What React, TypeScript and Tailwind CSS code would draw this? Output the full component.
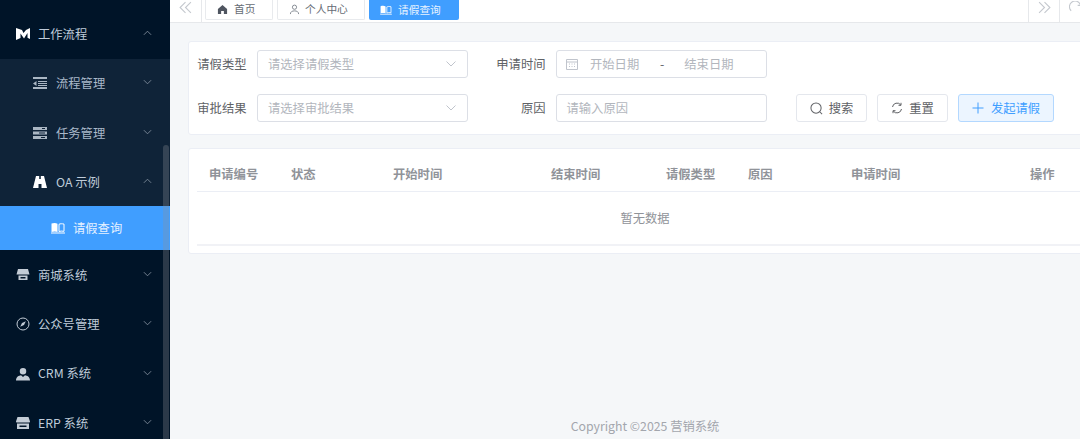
const font = { fontFamily: '"Noto Sans CJK SC", "Noto Sans", sans-serif' };

function Chevron({ up }: { up?: boolean }) {
  return (
    <svg viewBox="0 0 10 6" className="absolute left-[143px] top-1/2 -translate-y-[calc(50%+1px)] w-[9px] h-[6px] text-[#7f8c9b]" fill="none" stroke="currentColor" strokeWidth="1">
      <path d={up ? "M1 5l4-4 4 4" : "M1 1l4 4 4-4"} />
    </svg>
  );
}

const icons: Record<string, React.ReactNode> = {
  workflow: <path d="M0 1l6 2 1.500 3L10 3l4-2v11l-2.500-1.300V6L8 11.500 4.500 6.500V11L0 13z" />,
  flow: <path d="M0 1h14v2H0zM5 5h9v1H5zM5 7h9v1H5zM5 9h9v1H5zM0 11h14v2H0zM3.500 5v5L0 7.500z" />,
  task: (
    <path fillRule="evenodd" d="M0 1h14v3H0zM9 2v1h3V2zM0 5.500h14v3H0zM6 6.500v1h6v-1zM0 10h14v3H0zM8 11v1h4v-1z" />
  ),
  oa: <path d="M3 1h3.200v3h1.600V1H11l3 12H8.500V9h-3v4H0z" />,
  shop: <path d="M2 1h10l1.500 5.500H.5zM2.500 7.500h9V12h-9zM4.500 9v1.500h5V9z" fillRule="evenodd" />,
  user: <path d="M7 1a3 3 0 110 6.500A3 3 0 017 1zM0 13.500C0 10 3 8.500 5 8.300L7 10l2-1.700c2 .2 5 1.700 5 5.200z" />,
  store: (
    <path fillRule="evenodd" d="M1.500 1h11L14 5.500c0 .6-.4 1-1 1H1c-.6 0-1-.4-1-1zM1 7.500h12V13H1zM3.500 9.500v1.500h7V9.500z" />
  ),
};

function BookIcon({ className }: { className: string }) {
  return (
    <svg viewBox="0 0 14 12" className={className} fill="currentColor">
      <path d="M.5 1.500c2-.8 4.500-.8 6 .2v8.300C5 9.300 2.500 9.300.5 10z" />
      <path d="M8 2.300c1.300-.7 3-.7 5-.2V9.300c-2-.4-3.700-.3-5 .2z" fill="none" stroke="currentColor" />
      <path d="M0 10.500h14v1H0z" />
    </svg>
  );
}

function NavRow({ label, icon, up, sub }: { label: string; icon: React.ReactNode; up?: boolean; sub?: boolean }) {
  return (
    <div className={`relative flex items-center h-[49.300px] text-[12.300px] ${sub ? "pl-[33px] text-[#a9b8c9]" : "pl-4 text-[#bfcbd9]"}`}>
      <span className={`${sub ? "w-[23px]" : "w-[22px]"} shrink-0`}>{icon}</span>
      <span>{label}</span>
      <Chevron up={up} />
    </div>
  );
}

function Glyph({ name, white, dim }: { name: string; white?: boolean; dim?: boolean }) {
  return (
    <svg
      viewBox="0 0 14 14"
      className={`w-[14px] h-[14px] ${white ? "text-white" : dim ? "text-[#aab6c3]" : "text-[#c3ccd6]"}`}
      fill="currentColor"
    >
      {icons[name]}
    </svg>
  );
}

function Sidebar() {
  return (
    <aside className="relative w-[170px] shrink-0 h-full overflow-hidden bg-[#001428] pt-[9.500px]">
      <NavRow label="工作流程" up icon={<Glyph name="workflow" white />} />
      <div className="bg-[#0f2338]">
        <NavRow sub label="流程管理" icon={<Glyph name="flow" dim />} />
        <NavRow sub label="任务管理" icon={<Glyph name="task" dim />} />
        <div className="relative flex items-center h-[49px] pl-[33px] text-[12.300px] text-[#bfcbd9]">
          <span className="w-[23px] shrink-0"><Glyph name="oa" white /></span>
          <span>OA 示例</span>
          <Chevron up />
        </div>
        <div className="flex items-center h-[44px] pl-[51px] bg-[#409eff] text-[12.300px] text-[#e6f1ff]">
          <BookIcon className="w-[14px] h-[12px] mr-[8px] text-white" />
          <span>请假查询</span>
        </div>
      </div>
      <NavRow label="商城系统" icon={<Glyph name="shop" />} />
      <NavRow
        label="公众号管理"
        icon={
          <svg viewBox="0 0 14 14" className="w-[14px] h-[14px] text-[#c3ccd6]" fill="none" stroke="currentColor">
            <circle cx="7" cy="7" r="6" />
            <path d="M9.800 4.200L8 8 4.200 9.800 6 6z" fill="currentColor" stroke="none" />
          </svg>
        }
      />
      <NavRow label="CRM 系统" icon={<Glyph name="user" />} />
      <NavRow label="ERP 系统" icon={<Glyph name="store" />} />
      <div className="absolute left-[163px] top-[145px] bottom-0 w-[6px] rounded-t-[3px] bg-[#9093994d]" />
    </aside>
  );
}

function Tab({ label, icon, active, w }: { label: string; icon: React.ReactNode; active?: boolean; w: string }) {
  return (
    <div
      className={`${w} flex items-center h-[20px] px-[11px] rounded-b-[2px] text-[10.700px] ${
        active ? "bg-[#409eff] text-[#e8f3ff]" : "bg-white border border-t-0 border-[#e8eaed] text-[#666c75]"
      }`}
    >
      {icon}
      <span>{label}</span>
    </div>
  );
}

function TabBar() {
  return (
    <div className="relative flex h-[23px] shrink-0 bg-white border-b border-[#e6e8eb]">
      <div className="flex items-center justify-center w-[32px] h-full pb-[8px] border-r border-[#e6e8eb] text-[#c4c8ce]">
        <svg viewBox="0 0 12 12" className="w-[13px] h-[13px]" fill="none" stroke="currentColor" strokeWidth="1">
          <path d="M6 1L1 6l5 5M11 1L6 6l5 5" />
        </svg>
      </div>
      <div className="flex gap-[4px] ml-[3px]">
        <Tab
          w="w-[68px]"
          label="首页"
          icon={
            <svg viewBox="0 0 12 12" className="w-[11px] h-[11px] mr-[6px] text-[#4f5560]" fill="currentColor">
              <path d="M6 1l5 4.500V11H7.500V7.500h-3V11H1V5.500z" />
            </svg>
          }
        />
        <Tab
          w="w-[88px]"
          label="个人中心"
          icon={
            <svg viewBox="0 0 12 12" className="w-[11px] h-[11px] mr-[5px] text-[#7d838c]" fill="none" stroke="currentColor">
              <circle cx="6" cy="3.500" r="2.300" />
              <path d="M1.500 11c0-2.500 2-3.500 4.500-3.500s4.500 1 4.500 3.500" />
            </svg>
          }
        />
        <Tab w="w-[90px]" active label="请假查询" icon={<BookIcon className="w-[12px] h-[10px] mr-[6px] text-white" />} />
      </div>
      <div className="absolute left-[858px] top-0 flex h-full">
        <div className="flex items-center justify-center w-[31px] h-full pb-[8px] border-l border-[#e6e8eb] text-[#c4c8ce]">
          <svg viewBox="0 0 12 12" className="w-[13px] h-[13px]" fill="none" stroke="currentColor" strokeWidth="1">
            <path d="M1 1l5 5-5 5M6 1l5 5-5 5" />
          </svg>
        </div>
        <div className="flex items-center h-full pl-[9px] pb-[8px] border-l border-[#e6e8eb] text-[#c4c8ce]">
          <svg viewBox="0 0 12 12" className="w-[13px] h-[13px]" fill="none" stroke="currentColor" strokeWidth="1">
            <path d="M10.500 3.500A5.200 5.200 0 102 9" />
            <path d="M11 1v3H8" />
          </svg>
        </div>
      </div>
    </div>
  );
}

function Field({ label, labelW, children, w }: { label: string; labelW: string; w: string; children: React.ReactNode }) {
  return (
    <div className="flex items-center">
      <label className={`${labelW} text-right pr-[10.500px] text-[12.300px] whitespace-nowrap text-[#606266]`}>{label}</label>
      <div className={`${w} h-[28px] flex items-center rounded-[3px] border border-[#dcdfe6] bg-white text-[12.300px] text-[#b2b6bd]`}>
        {children}
      </div>
    </div>
  );
}

function SelectBody({ text }: { text: string }) {
  return (
    <>
      <span className="pl-[10px] flex-1">{text}</span>
      <svg viewBox="0 0 10 6" className="w-[10px] h-[6px] mr-[11px] text-[#c0c4cc]" fill="none" stroke="currentColor">
        <path d="M.5.500L5 5 9.500.500" />
      </svg>
    </>
  );
}

function Button({ icon, label, primary, w }: { icon: React.ReactNode; label: string; primary?: boolean; w: string }) {
  return (
    <button
      className={`${w} h-[28px] flex items-center justify-center gap-[6px] rounded-[3px] border text-[12.300px] ${
        primary ? "bg-[#ecf5ff] border-[#b3d8ff] text-[#409eff]" : "bg-white border-[#e4e7ed] text-[#606266]"
      }`}
    >
      {icon}
      <span>{label}</span>
    </button>
  );
}

function FilterCard() {
  return (
    <div className="w-[920px] h-[94px] ml-[18px] mt-[18px] rounded-[3px] border border-[#ebeef5] bg-white pt-[8px]">
      <div className="flex">
        <Field label="请假类型" labelW="w-[68px]" w="w-[211px]"><SelectBody text="请选择请假类型" /></Field>
        <Field label="申请时间" labelW="w-[88px]" w="w-[211px]">
          <svg viewBox="0 0 12 12" className="w-[12px] h-[12px] ml-[9px] text-[#c0c4cc]" fill="none" stroke="currentColor">
            <path d="M.5 1.500h11v10H.5zM.5 4h11M3 6h1M5.500 6h1M8 6h1M3 8.500h1M5.500 8.500h1M8 8.500h1" />
          </svg>
          <span className="ml-[12px] w-[50px] whitespace-nowrap">开始日期</span>
          <span className="ml-[20px] text-[#606266]">-</span>
          <span className="ml-[20px] whitespace-nowrap">结束日期</span>
        </Field>
      </div>
      <div className="flex mt-[16px]">
        <Field label="审批结果" labelW="w-[68px]" w="w-[211px]"><SelectBody text="请选择审批结果" /></Field>
        <Field label="原因" labelW="w-[88px]" w="w-[211px]"><span className="pl-[9.500px]">请输入原因</span></Field>
        <div className="flex gap-[10px] ml-[29px]">
          <Button
            w="w-[71px]"
            label="搜索"
            icon={
              <svg viewBox="0 0 14 14" className="w-[13px] h-[13px]" fill="none" stroke="currentColor" strokeWidth="1.100">
                <circle cx="6.500" cy="6.500" r="5.500" />
                <path d="M10.500 10.500l2.500 2.500" />
              </svg>
            }
          />
          <Button
            w="w-[71px]"
            label="重置"
            icon={
              <svg viewBox="0 0 12 12" className="w-[12px] h-[12px]" fill="none" stroke="currentColor">
                <path d="M1.500 5A4.600 4.600 0 019.800 3M10.500 7a4.600 4.600 0 01-8.300 2" />
                <path d="M10 .8V3.300H7.500M2 11.200V8.700h2.500" />
              </svg>
            }
          />
          <Button
            primary
            w="w-[96px]"
            label="发起请假"
            icon={
              <svg viewBox="0 0 12 12" className="w-[12px] h-[12px] mr-[1px]" fill="none" stroke="currentColor">
                <path d="M6 .5v11M.5 6h11" />
              </svg>
            }
          />
        </div>
      </div>
    </div>
  );
}

const columns = [
  { title: "申请编号", width: "w-[82px]" },
  { title: "状态", width: "w-[102px]" },
  { title: "开始时间", width: "w-[158px]" },
  { title: "结束时间", width: "w-[115px]" },
  { title: "请假类型", width: "w-[82px]" },
  { title: "原因", width: "w-[103px]" },
  { title: "申请时间", width: "w-[179px]" },
  { title: "操作", width: "w-[80px]" },
];

function TableCard() {
  return (
    <div className="w-[920px] h-[106px] ml-[18px] mt-[13px] rounded-[3px] border border-[#ebeef5] bg-white pl-[8px] pt-[8px]">
      <table className="table-fixed w-[901px] border-collapse text-[12.300px]">
        <thead>
          <tr className="h-[34px] border-b border-[#ebeef5]">
            {columns.map((c) => (
              <th key={c.title} className={`${c.width} pl-[12px] text-left font-semibold whitespace-nowrap text-[#909399]`}>
                {c.title}
              </th>
            ))}
          </tr>
        </thead>
        <tbody>
          <tr className="h-[54px] border-b-2 border-[#f1f2f6]">
            <td colSpan={8} className="pr-[5px] pt-[1px] text-center text-[#909399]">
              暂无数据
            </td>
          </tr>
        </tbody>
      </table>
    </div>
  );
}

export default function App() {
  return (
    <div className="flex w-[1080px] h-[439px] overflow-hidden bg-[#f5f7f9]" style={font}>
      <Sidebar />
      <main className="relative flex-1 flex flex-col min-w-0 overflow-hidden">
        <TabBar />
        <FilterCard />
        <TableCard />
        <footer className="absolute left-[40px] right-0 top-[417px] text-center text-[12.300px] leading-[18px] text-[#a3a6ad]">
          Copyright ©2025 营销系统
        </footer>
      </main>
    </div>
  );
}
